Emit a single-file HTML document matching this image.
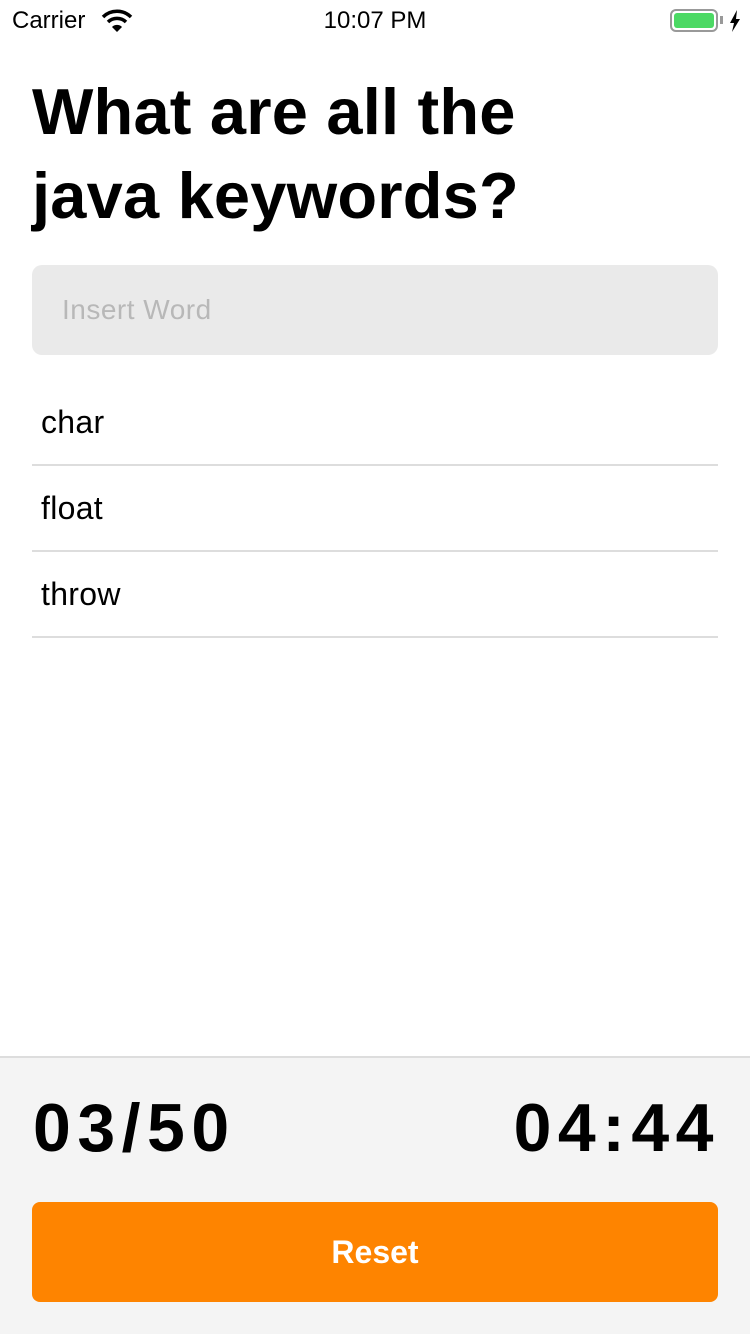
<!DOCTYPE html>
<html><head><meta charset="utf-8"><style>
*{margin:0;padding:0;box-sizing:border-box}
body{width:750px;height:1334px;background:#fff;font-family:"Liberation Sans",sans-serif;position:relative;overflow:hidden;color:#000}
.abs{position:absolute}
h1{position:absolute;left:32px;top:70px;font-size:65px;line-height:84px;font-weight:bold;letter-spacing:0.2px}
.input{left:32px;top:265px;width:686px;height:90px;background:#eaeaea;border-radius:10px;font-size:28px;color:#b8b8b8;padding:29px 0 0 30px;letter-spacing:0.5px}
.row{left:32px;width:686px;height:86px;border-bottom:2px solid #ddd;font-size:32px;padding:24px 0 0 9px;letter-spacing:0.3px}
.footer{left:0;top:1056px;width:750px;height:278px;background:#f4f4f4;border-top:2px solid #ddd}
.big{font-size:68px;font-weight:bold;top:1089px;letter-spacing:6.5px}
.btn{left:32px;top:1202px;width:686px;height:100px;background:#fe8400;border-radius:8px;color:#fff;font-size:32px;font-weight:bold;text-align:center;line-height:100px}
</style></head><body>
<div class="abs" style="left:12px;top:7px;font-size:24px">Carrier</div>
<svg class="abs" style="left:101px;top:9px" width="32" height="24" viewBox="0 0 32 24"><path d="M2 8a20 20 0 0 1 28 0" stroke="#000" stroke-width="3.5" fill="none"/><path d="M7 13a13 13 0 0 1 18 0" stroke="#000" stroke-width="3.5" fill="none"/><path d="M11 18l5 5 5-5a7 7 0 0 0-10 0z" fill="#000"/></svg>
<div class="abs" style="left:0;width:750px;text-align:center;top:7px;font-size:24px">10:07 PM</div>
<div class="abs" style="left:670px;top:9px;width:48px;height:23px;border:2px solid #999;border-radius:6px;padding:2px"><div style="background:#4cd964;width:100%;height:100%;border-radius:3px"></div></div>
<div class="abs" style="left:720px;top:16px;width:3px;height:8px;background:#999"></div>
<svg class="abs" style="left:729px;top:10px" width="12" height="22" viewBox="0 0 12 22"><path d="M8 0L1 13h4l-2 9 8-13H7z" fill="#000"/></svg>
<h1>What are all the<br>java keywords?</h1>
<div class="abs input">Insert Word</div>
<div class="abs row" style="top:380px">char</div>
<div class="abs row" style="top:466px">float</div>
<div class="abs row" style="top:552px">throw</div>
<div class="abs footer"></div>
<div class="abs big" style="left:33px">03/50</div>
<div class="abs big" style="right:30px">04:44</div>
<div class="abs btn">Reset</div>
</body></html>
